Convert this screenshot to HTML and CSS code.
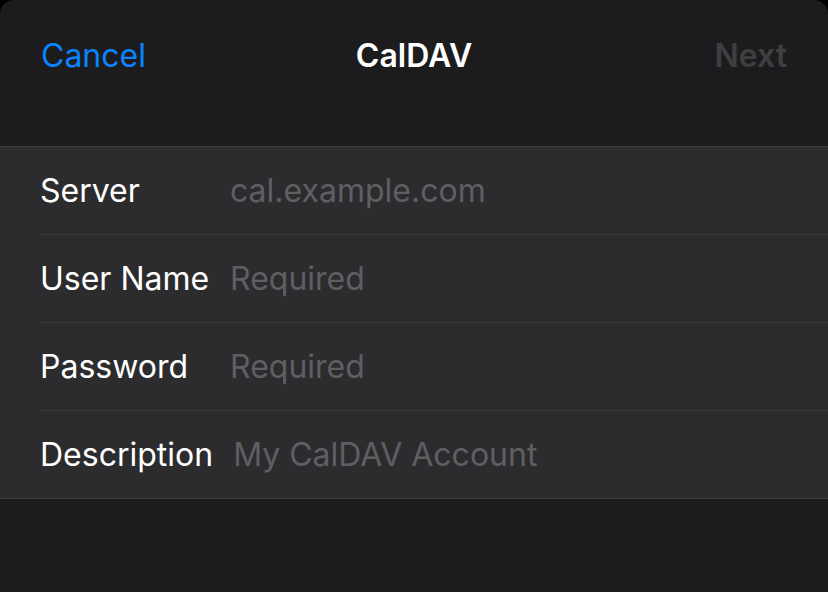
FILE: index.html
```html
<!DOCTYPE html>
<html lang="en">
<head>
  <meta charset="UTF-8">
  <meta name="viewport" content="width=device-width, initial-scale=1">
  <title>CalDAV</title>
  <link rel="stylesheet" href="styles.css">
</head>
<body>
  <div class="sheet">
    <div class="nav-bar">
      <a class="nav-btn cancel" href="#">Cancel</a>
      <h1 class="nav-title">CalDAV</h1>
      <span class="nav-btn next">Next</span>
    </div>

    <form class="field-group">
      <label class="row">
        <span class="row-inner">
          <span class="row-label">Server</span>
          <input type="text" name="server" placeholder="cal.example.com">
        </span>
      </label>
      <label class="row">
        <span class="row-inner">
          <span class="row-label">User Name</span>
          <input type="text" name="username" placeholder="Required">
        </span>
      </label>
      <label class="row">
        <span class="row-inner">
          <span class="row-label">Password</span>
          <input type="password" name="password" placeholder="Required">
        </span>
      </label>
      <label class="row">
        <span class="row-inner">
          <span class="row-label">Description</span>
          <input type="text" name="description" placeholder="My CalDAV Account">
        </span>
      </label>
    </form>
  </div>
</body>
</html>
```

FILE: styles.css
```css
html, body { margin: 0; padding: 0; height: 100%; }
body { background: #000; font-family: Inter, "Open Sans", sans-serif; -webkit-font-smoothing: antialiased; }

.sheet { height: 100%; background: #1c1c1e; border-radius: 14px 14px 0 0; overflow: hidden; }

.nav-bar { height: 110px; padding: 0 41px; display: flex; align-items: center; justify-content: space-between; position: relative; margin-bottom: 36px; }
.nav-btn { font-size: 32px; text-decoration: none; }
.nav-btn.cancel { color: #0a84ff; }
.nav-btn.next { color: #3f3f42; font-weight: 600; }
.nav-title { position: absolute; left: 0; right: 0; text-align: center; margin: 0; font-size: 32px; font-weight: 600; color: #fff; pointer-events: none; }

.field-group { margin: 0; background: #2c2c2e; border-top: 1px solid #3c3c3f; border-bottom: 1px solid #3c3c3f; }
.row { display: block; padding-left: 40px; }
.row-inner { display: flex; align-items: center; height: 87px; border-bottom: 1px solid #3c3c3f; gap: 20px; }
.row:last-child .row-inner { border-bottom: none; }
.row-label { min-width: 170px; color: #fff; font-size: 32px; }
.row input { flex: 1; min-width: 0; background: transparent; border: none; outline: none; padding: 0; font-family: inherit; font-size: 32px; color: #fff; }
.row input::placeholder { color: #5f5f63; }
```
